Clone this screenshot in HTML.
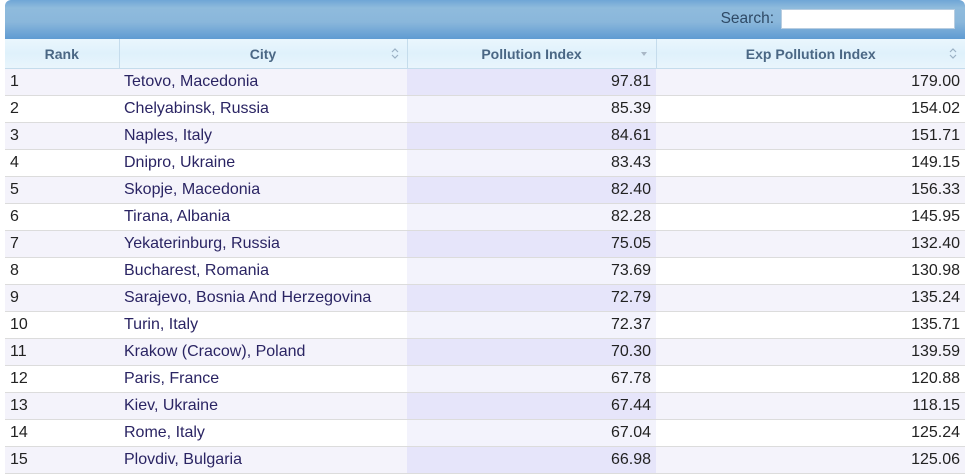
<!DOCTYPE html>
<html><head><style>
body{margin:0;background:#fff;width:973px;height:473px;overflow:hidden;font-family:"Liberation Sans",Arial,sans-serif;}
.wrap{position:absolute;left:5px;top:0;width:960px;}
.bar{height:39px;border-radius:6px 6px 0 0;background:linear-gradient(#6fa6d6 0,#8fbbdc 8px,#8ab7db 22px,#5f9bd2 39px);position:relative;}
.bar .s{position:absolute;right:191px;top:10px;font-size:15.5px;color:#2f4a66;}
.bar .in{position:absolute;right:10px;top:9px;width:174px;height:20px;background:#fff;border:1px solid #b8cde0;box-sizing:border-box;}
table{border-collapse:collapse;width:960px;table-layout:fixed;}
th{height:28px;padding:0;padding-top:1px;font-size:14px;font-weight:bold;color:#4a6784;background:linear-gradient(#eaf6fd,#dff1fb 50%,#e9f5fc);border-right:1px solid #c5dcec;border-bottom:1px solid #c5dcec;position:relative;}
th:last-child{border-right:none}
th svg{position:absolute;right:8px;top:9px;}
td{height:26px;padding:0 5px;font-size:16px;color:#222;border-bottom:1px solid #dcdcdc;white-space:nowrap;}
td:nth-child(2){color:#2a2463;}
td:nth-child(3),td:nth-child(4){text-align:right;}
tr.o td{background:#f4f3fb;}
tr.o td:nth-child(3){background:#e6e5fa;}
tr.e td:nth-child(3){background:#f3f3fc;}
</style></head><body>
<div class="wrap">
<div class="bar"><span class="s">Search:</span><div class="in"></div></div>
<table>
<colgroup><col style="width:114px"><col style="width:288px"><col style="width:249px"><col style="width:309px"></colgroup>
<tr><th>Rank</th><th>City<svg width="8" height="11" viewBox="0 0 8 11"><path d="M1 4L4 1L7 4M1 7L4 10L7 7" fill="none" stroke="#9ab0c4" stroke-width="1.2"/></svg></th><th>Pollution Index<svg width="8" height="11" viewBox="0 0 8 11"><path d="M1 4L7 4L4 8Z" fill="#a9b8c6"/></svg></th><th>Exp Pollution Index<svg width="8" height="11" viewBox="0 0 8 11"><path d="M1 4L4 1L7 4M1 7L4 10L7 7" fill="none" stroke="#9ab0c4" stroke-width="1.2"/></svg></th></tr>
<tr class="o"><td>1</td><td>Tetovo, Macedonia</td><td>97.81</td><td>179.00</td></tr>
<tr class="e"><td>2</td><td>Chelyabinsk, Russia</td><td>85.39</td><td>154.02</td></tr>
<tr class="o"><td>3</td><td>Naples, Italy</td><td>84.61</td><td>151.71</td></tr>
<tr class="e"><td>4</td><td>Dnipro, Ukraine</td><td>83.43</td><td>149.15</td></tr>
<tr class="o"><td>5</td><td>Skopje, Macedonia</td><td>82.40</td><td>156.33</td></tr>
<tr class="e"><td>6</td><td>Tirana, Albania</td><td>82.28</td><td>145.95</td></tr>
<tr class="o"><td>7</td><td>Yekaterinburg, Russia</td><td>75.05</td><td>132.40</td></tr>
<tr class="e"><td>8</td><td>Bucharest, Romania</td><td>73.69</td><td>130.98</td></tr>
<tr class="o"><td>9</td><td>Sarajevo, Bosnia And Herzegovina</td><td>72.79</td><td>135.24</td></tr>
<tr class="e"><td>10</td><td>Turin, Italy</td><td>72.37</td><td>135.71</td></tr>
<tr class="o"><td>11</td><td>Krakow (Cracow), Poland</td><td>70.30</td><td>139.59</td></tr>
<tr class="e"><td>12</td><td>Paris, France</td><td>67.78</td><td>120.88</td></tr>
<tr class="o"><td>13</td><td>Kiev, Ukraine</td><td>67.44</td><td>118.15</td></tr>
<tr class="e"><td>14</td><td>Rome, Italy</td><td>67.04</td><td>125.24</td></tr>
<tr class="o"><td>15</td><td>Plovdiv, Bulgaria</td><td>66.98</td><td>125.06</td></tr>
</table>
</div>
</body></html>
